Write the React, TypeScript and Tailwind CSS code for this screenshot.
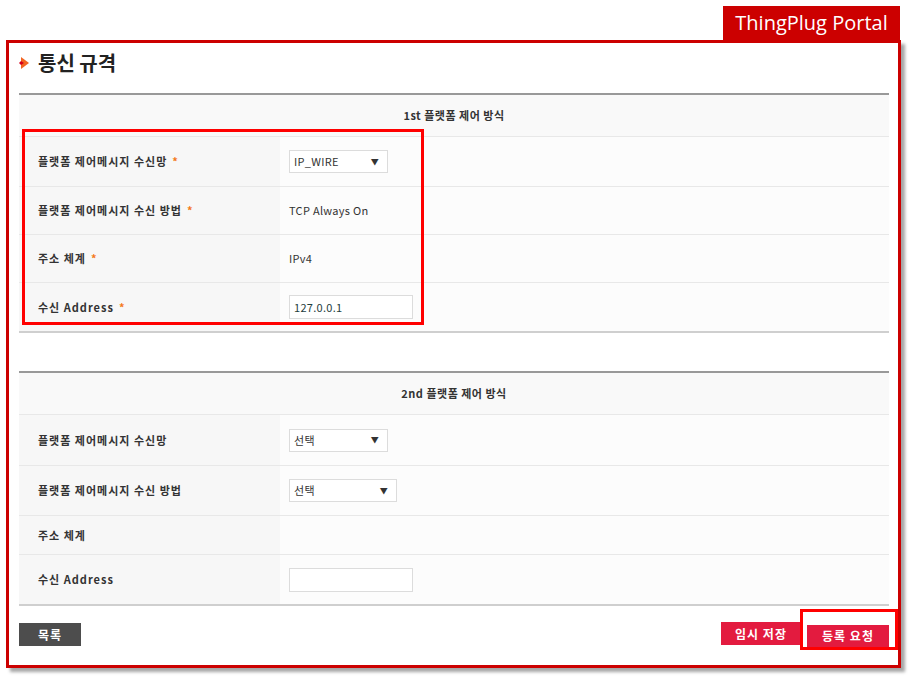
import React from 'react';

const font = { fontFamily: '"Noto Sans CJK KR", "Liberation Sans", sans-serif' };

function Star() {
  return <span className="ml-[5px] text-[#f47920]">*</span>;
}

function Select({ value, width }: { value: string; width: string }) {
  return (
    <div className={`flex h-[23px] ${width} items-center justify-between border border-[#dcdcdc] bg-white pl-[4px] pr-[8px] text-[11px] text-[#333]`}>
      <span>{value}</span>
      <span className="text-[8px]">▼</span>
    </div>
  );
}

function Input({ value }: { value?: string }) {
  return (
    <div className="flex h-[24px] w-[124px] items-center border border-[#dcdcdc] bg-white pl-[4px] text-[11px] text-[#1f4040]">
      {value}
    </div>
  );
}

function Row({ label, star, children, h }: { label: string; star?: boolean; children?: React.ReactNode; h: string }) {
  return (
    <div className={`flex ${h} border-t border-[#e8e8e8]`}>
      <div className="flex w-[261px] items-center bg-[#f7f7f7] pl-[19px] text-[11px] font-bold tracking-[1px] text-[#333]">
        {label}
        {star && <Star />}
      </div>
      <div className="flex flex-1 items-center bg-[#fcfcfc] pl-[9px] text-[11px] tracking-[0.3px] text-[#333]">{children}</div>
    </div>
  );
}

function Header({ text }: { text: string }) {
  return (
    <div className="flex h-[43px] items-center justify-center border-t-2 border-[#999] bg-[#f9f9f9] text-[11px] font-bold tracking-[0.5px] text-[#333]">
      {text}
    </div>
  );
}

export default function App() {
  return (
    <div className="relative h-[676px] w-[909px] overflow-hidden bg-white" style={font}>
      {/* 탭 */}
      <div className="absolute left-[723px] top-[6px] z-10 flex h-[36px] w-[177px] items-center justify-center bg-[#cc0000] pb-[2px] text-[20px] text-white" style={{ fontFamily: '"Open Sans", "Noto Sans", sans-serif' }}>
        ThingPlug Portal
      </div>

      <div className="ml-[6px] mt-[40px] h-[628px] w-[895px] border-[3px] border-[#cc0000] pl-[10px] pr-[9px] shadow-[4px_4px_3px_rgba(0,0,0,0.35)]">
        {/* 제목 */}
        <div className="flex h-[50px] items-start pt-[7px]">
          <div className="flex h-[26px] items-center">
            <svg width="12" height="14" viewBox="0 0 12 14" className="mr-[7px]">
              <polygon points="2,1 10,7 2,13" fill="#f26522" />
              <polygon points="2,5 5,7 2,9 0,7" fill="#d6001c" />
            </svg>
            <span className="text-[20px] font-bold leading-[26px] text-[#222]">통신 규격</span>
          </div>
        </div>

        {/* 1st */}
        <div className="relative">
          <Header text="1st 플랫폼 제어 방식" />
          <Row label="플랫폼 제어메시지 수신망" star h="h-[50px]">
            <Select value="IP_WIRE" width="w-[99px]" />
          </Row>
          <Row label="플랫폼 제어메시지 수신 방법" star h="h-[48px]">
            TCP Always On
          </Row>
          <Row label="주소 체계" star h="h-[48px]">
            IPv4
          </Row>
          <Row label="수신 Address" star h="h-[49px]">
            <Input value="127.0.0.1" />
          </Row>
          <div className="h-[2px] bg-[#cfcfcf]" />
          <div className="pointer-events-none absolute left-[3px] top-[36px] h-[196px] w-[402px] border-[3px] border-[#ff0000]" />
        </div>

        {/* 2nd */}
        <div className="mt-[38px]">
          <Header text="2nd 플랫폼 제어 방식" />
          <Row label="플랫폼 제어메시지 수신망" h="h-[51px]">
            <Select value="선택" width="w-[99px]" />
          </Row>
          <Row label="플랫폼 제어메시지 수신 방법" h="h-[50px]">
            <Select value="선택" width="w-[108px]" />
          </Row>
          <Row label="주소 체계" h="h-[39px]" />
          <Row label="수신 Address" h="h-[50px]">
            <Input />
          </Row>
          <div className="h-[2px] bg-[#cfcfcf]" />
        </div>

        {/* 버튼 */}
        <div className="mt-[16px] flex items-center justify-between">
          <button className="h-[23px] w-[62px] bg-[#4d4d4d] text-[12px] font-bold tracking-[1px] text-white">목록</button>
          <div className="flex gap-[6px]">
            <button className="h-[23px] w-[80px] bg-[#e31b3f] text-[12px] font-bold tracking-[1px] text-white">임시 저장</button>
            <div className="relative">
              <button className="h-[23px] w-[82px] bg-[#e31b3f] text-[12px] font-bold tracking-[1px] text-white">등록 요청</button>
              <div className="pointer-events-none absolute left-[-7px] top-[-13px] h-[41px] w-[98px] border-[3px] border-[#ff0000]" />
            </div>
          </div>
        </div>
      </div>
    </div>
  );
}
